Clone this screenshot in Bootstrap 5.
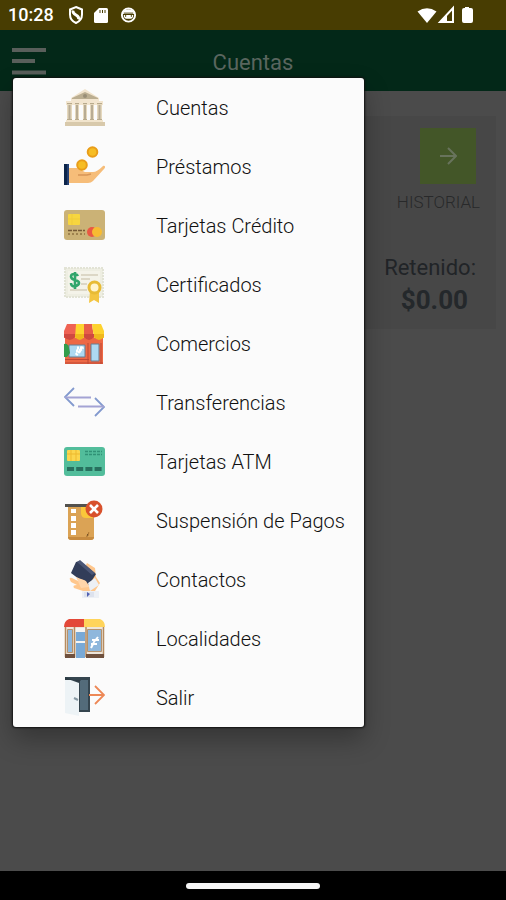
<!DOCTYPE html>
<html lang="es">
<head>
<meta charset="utf-8">
<meta name="viewport" content="width=device-width, initial-scale=1">
<title>Cuentas</title>
<link href="https://cdn.jsdelivr.net/npm/bootstrap@5.3.0/dist/css/bootstrap.min.css" rel="stylesheet">
<style>
body{font-family:Roboto,"Liberation Sans",sans-serif;background:#4b4b4b;color:#212427}
.status-bar{background:#483d02;height:30px;color:#fff;font-size:18px;font-weight:500;line-height:32px}
.app-bar{background:#032818;height:61px}
.app-title{font-size:22px;line-height:32px;color:#5a665f}
.menu-btn{width:36px;height:32px;line-height:0}
.account-panel{background:#474747;min-height:213px;margin:25px 10px 0}
.history-btn{width:56px;height:56px;background:#435628;line-height:0}
.history-label{font-size:17px;line-height:20px;color:#28292a;font-weight:300}
.held-label{font-size:22px;line-height:32px}
.held-value{font-size:26px;line-height:32px;font-weight:700;color:#24282b}
.menu-panel{top:78px;left:13px;width:calc(100% - 155px);max-width:420px;background:#fbfbfb;border-radius:3px;box-shadow:0 0 2px 1px #111,0 12px 26px rgba(0,0,0,.3)}
.menu-row{height:59px;padding-left:51px;gap:51px;font-size:20px;line-height:28px;color:#111;font-weight:300}
.menu-row svg{width:41px;height:42px;flex:none}
.nav-strip{background:#000;height:29px}
.home-pill{width:134px;height:6px;border-radius:3px;background:#f5f5f5}
</style>
</head>
<body>
<div class="min-vh-100 d-flex flex-column position-relative">
  <div class="status-bar d-flex align-items-center justify-content-between">
    <div class="d-flex align-items-center ps-2">
      <span>10:28</span>
      <svg class="ms-2 ps-1" width="24" height="20" viewBox="0 0 20 20" fill="none" stroke="#fff" aria-hidden="true"><path d="M10 2 16 4.500V9.500C16 13.500 13.500 16.500 10 18 6.500 16.500 4 13.500 4 9.500V4.500Z" stroke-width="2"/><path d="M7 5.500Q6.500 8 10 10T12.500 14.500" stroke-width="2.800"/></svg>
      <svg class="ms-2" width="14" height="17" viewBox="0 0 14 17" aria-hidden="true"><path fill="#fff" d="M5 1h7.500Q14 1 14 2.500v12Q14 16 12.500 16h-11Q0 16 0 14.500V6Z"/><path stroke="#483d02" d="M6 3v3M8.500 3v3M11 3v3"/></svg>
      <svg class="ms-2 ps-1" width="21" height="18" viewBox="0 0 18 18" aria-hidden="true"><circle cx="9" cy="9" r="7" fill="none" stroke="#fff" stroke-width="2"/><path fill="#fff" d="M2 6Q9 0 16 6V8H2ZM4 9h10q0 4-3 4H7Q4 13 4 9Z"/><path d="M4 7h10M6 9v2M12 9v2" stroke="#483d02"/></svg>
    </div>
    <svg class="me-4" width="65" height="20" viewBox="0 0 65 20" aria-hidden="true"><path fill="#fff" d="M.500 6.500Q10 0 19.500 6.500L10 18Z"/><path fill="none" stroke="#fff" stroke-width="2" d="M36 3V17H23Z"/><path fill="#fff" d="m23 17 7-8v8Z"/><path fill="#fff" d="M48 2h4v1h2q2 0 2 2v11q0 2-2 2h-7q-2 0-2-2V5q0-2 2-2h1Z"/></svg>
  </div>
  <header class="app-bar d-grid align-items-center position-relative">
    <h1 class="app-title text-center fw-normal m-0 pt-1">Cuentas</h1>
    <button class="menu-btn btn p-0 border-0 position-absolute top-0 start-0 ms-2 mt-3 ps-1" type="button" aria-label="Menú"><svg width="34" height="30" viewBox="0 0 34 30" stroke="#595f5b" stroke-width="4" aria-hidden="true"><path d="M0 3h34M0 14h23M0 25.500h34"/></svg></button>
  </header>
  <main class="flex-grow-1">
    <section class="account-panel d-flex flex-column align-items-end">
      <div class="d-flex flex-column align-items-end pt-2 mt-1 pe-3">
        <button class="history-btn btn p-0 border-0 rounded-0 me-1" id="history" type="button" aria-labelledby="history-text"><svg width="18" height="18" viewBox="0 0 18 18" fill="none" stroke="#68735c" stroke-width="2" aria-hidden="true"><path d="M1 9h15M9 1l8 8-8 8"/></svg></button>
        <label class="history-label mt-2" for="history" id="history-text">HISTORIAL</label>
      </div>
      <div class="text-end mt-4 pt-3 pe-3">
        <div class="held-label me-1">Retenido:</div>
        <div class="held-value pe-2 me-1">$0.00</div>
      </div>
    </section>
  </main>
  <footer class="nav-strip d-flex align-items-center justify-content-center"><div class="home-pill"></div></footer>

  <nav class="menu-panel position-absolute" aria-label="Principal">
    <a class="menu-row d-flex align-items-center text-decoration-none" href="#cuentas">
      <svg viewBox="0 0 41 42" aria-hidden="true"><path fill="#f2e5cf" d="M7 11 21 2l14 9v3H7ZM2 14h37v4H2Z"/><path fill="#bbae91" d="m8 11 13-6 13 6v1H8Z"/><circle cx="21" cy="9" r="2" fill="#998e77"/><path fill="#e5d8be" d="M3 16h5v17H3Zm8 0h4v17h-4Zm8 0h4v17h-4Zm7 0h4v17h-4Zm7 0h5v17h-5Z"/><path stroke="#b8ac94" stroke-width="2" d="M5.500 18v14M13 18v14M21 18v14M28 18v14M35.500 18v14"/><path stroke="#b8aa8c" d="M3 16.500h5M11 16.500h4M19 16.500h4M26 16.500h4M33 16.500h5M3 32.500h5M11 32.500h4M19 32.500h4M26 32.500h4M33 32.500h5"/><path fill="#f1e4cc" d="M2 33h37v2H2Z"/><path fill="#d8c9ab" d="M1 35h40v4H1Z"/></svg><span>Cuentas</span></a>
    <a class="menu-row d-flex align-items-center text-decoration-none" href="#prestamos">
      <svg viewBox="0 0 41 42" aria-hidden="true"><path fill="#f6bd79" d="M4 22h9c4 0 5 3 8 4h8q4 0 10-6c2-1 3 1 1 3L29 35q-2 2-5 2H4Z"/><path fill="none" stroke="#d79557" stroke-width="1.500" d="M14 29h9l4-1"/><path fill="#243f70" d="M0 18h5v21H0Z"/><path fill="#0b2449" d="M0 18h3v21H0Z"/><g fill="#f6bd24" stroke="#e99d19" stroke-width="2"><circle cx="18" cy="19" r="4.800"/><circle cx="28.500" cy="6" r="4.800"/></g></svg><span>Préstamos</span></a>
    <a class="menu-row d-flex align-items-center text-decoration-none" href="#credito">
      <svg viewBox="0 0 41 42" aria-hidden="true"><rect y="5" width="41" height="30" rx="3" fill="#cbb276"/><rect x="4" y="9" width="12" height="11" rx="1" fill="#f7d63f"/><path stroke="#f0cb3a" d="M8 9v11M4 14h12"/><circle cx="28" cy="27" r="5" fill="#e95843"/><circle cx="33" cy="27" r="5" fill="#f7bb32"/><path stroke="#765a35" stroke-width="1.500" stroke-dasharray="4 1" d="M4 25.500h17"/><path stroke="#907342" stroke-width="1.500" stroke-dasharray="2 2" d="M4 29h17"/></svg><span>Tarjetas Crédito</span></a>
    <a class="menu-row d-flex align-items-center text-decoration-none" href="#certificados">
      <svg viewBox="0 0 41 42" aria-hidden="true"><rect x="1" y="4" width="38" height="29" fill="#eeeee2" stroke="#e2e3d5" stroke-width="2" stroke-dasharray="2 1"/><rect x="4" y="7" width="32" height="23" fill="#f4f3e9"/><path fill="none" stroke="#32a66c" stroke-width="2.600" d="M14 12Q13 10 10.500 10 7 10 7 12.500T11 16t4 3-4 3.500Q7 22.500 7 19M11 8v17"/><path stroke="#d4cebb" stroke-width="1.500" d="M17 11h17M17 15h9M17 20h6M6 26h17"/><path fill="#f3c541" d="m26 27-1 12 5-3 5 3V27Z"/><circle cx="30.500" cy="23.500" r="5.500" fill="#fff4ce" stroke="#e8bb35" stroke-width="3"/></svg><span>Certificados</span></a>
    <a class="menu-row d-flex align-items-center text-decoration-none" href="#comercios">
      <svg viewBox="0 0 41 42" aria-hidden="true"><path fill="#ed6845" d="M1 15h38v26H1Z"/><path fill="#ef6253" d="M3 1h9v14H0V8Z"/><path fill="#fdd52f" d="M12 1h8v14h-9Z"/><path fill="#e85e48" d="M20 1h8l2 14H20Z"/><path fill="#fdd22e" d="M28 1h9l3 7v7H30Z"/><path fill="#cf4940" d="M0 11h11v3q-5 6-11 0ZM20 11h10v3q-5 6-10 0Z"/><path fill="#f0b81c" d="M11 11h9v3q-4 6-9 0Zm19 0h10v3q-5 6-10 0Z"/><path fill="#add9f2" stroke="#687d91" d="M5 22h16v12H5ZM27 21h8v17h-8Z"/><path stroke="#fff" stroke-width="3" stroke-dasharray="2 1" d="m12 32 7-8M13 25h6M12 28h6"/><path fill="#329d4c" d="M0 21q4-1 5 4l1 5-3 4H0Z"/><path stroke="#bd4937" d="M1 36.500h24M1 40h38M24 20v21M37 20v21"/></svg><span>Comercios</span></a>
    <a class="menu-row d-flex align-items-center text-decoration-none" href="#transferencias">
      <svg viewBox="0 0 41 42" aria-hidden="true"><g fill="none" stroke-width="1.800"><path stroke="#8299ce" d="M10 6 1 15l9 9M31 16l9 9-9 9"/><path stroke="#a4a3d4" d="M1 15.500h26M14 24.500h26"/></g></svg><span>Transferencias</span></a>
    <a class="menu-row d-flex align-items-center text-decoration-none" href="#atm">
      <svg viewBox="0 0 41 42" aria-hidden="true"><rect y="6" width="41" height="29" rx="3" fill="#52bd9b"/><rect x="3" y="9" width="13" height="11" rx="1" fill="#fbd64e"/><path fill="none" stroke="#edb92e" d="M7 9v11M12 9v11M3 13h13"/><path stroke="#309276" stroke-width="1.500" stroke-dasharray="3 1" d="M21 10.500h17M21 13.500h17"/><path stroke="#28715f" stroke-width="4" stroke-dasharray="7 2.200" d="M3 28h36"/></svg><span>Tarjetas ATM</span></a>
    <a class="menu-row d-flex align-items-center text-decoration-none" href="#suspension">
      <svg viewBox="0 0 41 42" aria-hidden="true"><path fill="#dba355" d="M4 6h26v31q0 3-3 3H7q-3 0-3-3Z"/><path fill="#c78b40" d="M4 37h26v1q-1 2-3 2H7q-2 0-3-2Z"/><path fill="#53514d" d="M1 4h25v3H1Z"/><path fill="#fff" d="M7 9h5v4H7Zm0 7h5v5H7Zm0 7h5v5H7Zm0 7h5v5H7Z"/><path fill="#fac73a" d="M17 7h12v11h-7q-5 0-5-5Z"/><path stroke="#c38639" d="M22 37q3-1 3-5"/><circle cx="30" cy="9" r="8.500" fill="#d8512c"/><path stroke="#fff" stroke-width="2.600" d="m26 5 8 8m0-8-8 8"/></svg><span>Suspensión de Pagos</span></a>
    <a class="menu-row d-flex align-items-center text-decoration-none" href="#contactos">
      <svg viewBox="0 0 41 42" aria-hidden="true"><path fill="#ffc78d" d="m23 4 8 5 1 9 4 6-5 8H19l-9-3q-2-3 3-3L7 23q-3-5 1-4l6 3Z"/><path fill="#323d59" d="m16 2 16 13-7 11-5-5-5-1-8-6 5-11Z"/><path fill="#4b5675" d="m13 3 3-2 15 13-3 2Z"/><path fill="#ffd5aa" d="m12 18 10 4 3 6-8 1Z"/><path fill="#edf0f5" d="m24 24 7-5 4 7-9 6ZM18 32h17v7H18Z"/><path fill="#dde2ed" d="M20 33h10v5H20Z"/><path fill="#5160b1" d="m23 33 3 2-3 3Z"/></svg><span>Contactos</span></a>
    <a class="menu-row d-flex align-items-center text-decoration-none" href="#localidades">
      <svg viewBox="0 0 41 42" aria-hidden="true"><path fill="#e34838" d="M5 1h15v8H0Q0 3 5 1Z"/><path fill="#ffd45b" d="M20 1h16q5 2 5 8H20Z"/><path fill="#eee5da" d="M1 9h39v31H1Z"/><path fill="#8fb7dc" stroke="#b7926b" d="M3.500 11.500h5v23h-5ZM23.500 11.500h14v22h-14Z"/><path fill="#79a9d6" d="M12 14h9v26h-9Z"/><path fill="#f5f4f2" d="M11 10h11v4H11Zm1 13h9v2h-9Z"/><path stroke="#b58b60" stroke-width="1.500" d="M1.500 9v30M10.500 9v30M22 9v30M39.500 9v30"/><path stroke="#fff" stroke-width="2" d="m27 30 3-6 4-5M28 22h7M27 26h6"/><path fill="#70513e" d="M1 36h10v4H1Zm21 0h18v4H22Z"/></svg><span>Localidades</span></a>
    <a class="menu-row d-flex align-items-center text-decoration-none" href="#salir">
      <svg viewBox="0 0 41 42" aria-hidden="true"><path fill="#35454f" d="M1 0h25v35H1Z"/><path fill="#536b7a" d="M16 3h8v30h-8Z"/><path fill="#edf3f6" d="m1 1 14 5v33L1 36Z"/><path fill="#2d3b44" d="m1 0 14 5 2-2H1Z"/><path stroke="#8799a3" stroke-width="2" d="m10 21 4 2"/><path fill="none" stroke="#ed8856" stroke-width="1.800" d="M25 18h15M31 9l9 9-9 9"/></svg><span>Salir</span></a>
  </nav>
</div>
<script src="https://cdn.jsdelivr.net/npm/bootstrap@5.3.0/dist/js/bootstrap.bundle.min.js"></script>
</body>
</html>
